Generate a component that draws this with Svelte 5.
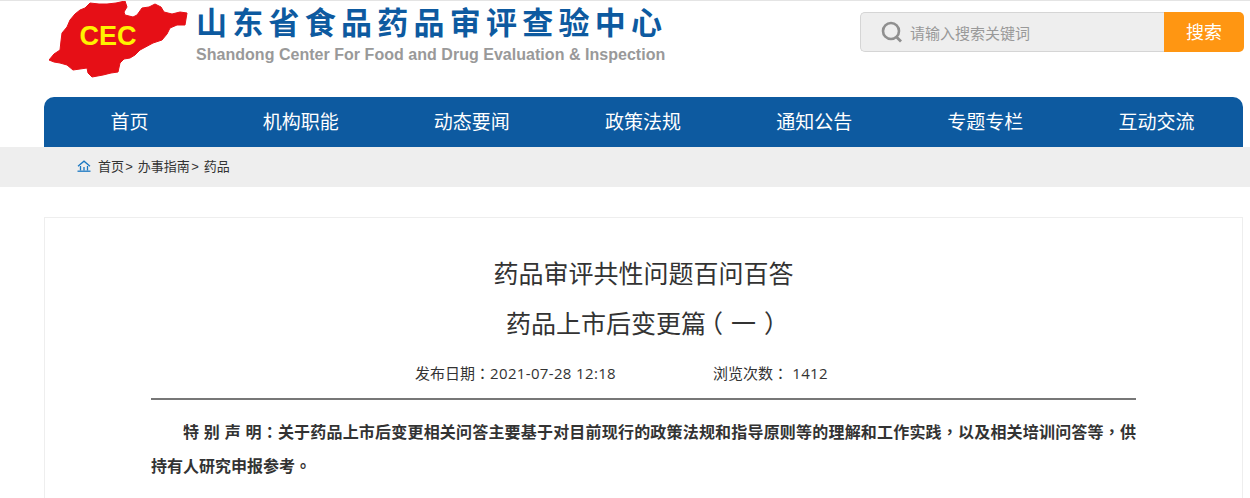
<script>
	const navItems = ['首页', '机构职能', '动态要闻', '政策法规', '通知公告', '专题专栏', '互动交流'];
</script>

<div class="page">
	<header class="top">
		<div class="brand">
			<svg class="logo" width="140" height="78" viewBox="0 0 140 78">
				<path
					d="M31 9 L36 7 L41 2 L50 3 L58 3 L67 2 L76 0 L78 6 L75 11 L76 14 L84 16 L88 14 L93 7 L100 6 L106 3 L112 6 L115 11 L123 13 L131 11 L138 12 L137 18 L136 24 L128 24 L121 27 L118 33 L113 39 L104 42 L91 49 L86 54 L81 57 L75 58 L71 62 L69 71 L62 72 L54 74 L43 76 L39 72 L38 67 L31 68 L24 69 L18 64 L11 62 L5 61 L0 59 L5 53 L11 49 L12 40 L13 32 L18 26 L21 19 L26 13 Z"
					fill="#e60f16"
					stroke="#e60f16"
					stroke-linejoin="round"
				/>
				<text x="59" y="44" text-anchor="middle" class="logo-text">CEC</text>
			</svg>
			<div class="names">
				<div class="cn">山东省食品药品审评查验中心</div>
				<div class="en">Shandong Center For Food and Drug Evaluation &amp; Inspection</div>
			</div>
		</div>
		<div class="search">
			<div class="field">
				<svg width="24" height="24" viewBox="0 0 24 24" fill="none" stroke="#8f8f8f">
					<circle cx="11" cy="11" r="8" stroke-width="2.6" />
					<path d="M16.5 17 L21 21.5" stroke-width="2.8" />
				</svg>
				<span>请输入搜索关键词</span>
			</div>
			<div class="btn">搜索</div>
		</div>
	</header>

	<nav>
		{#each navItems as item}
			<a href="#top">{item}</a>
		{/each}
	</nav>

	<div class="crumbs">
		<svg width="14" height="12" viewBox="0 0 14 12" fill="none" stroke="#1a78c2" stroke-width="1.3">
			<path d="M1 6.2 L7 1.2 L13 6.2" />
			<path d="M3.5 6 V10.5 M10.5 6 V10.5 M7 7 V10.5" />
			<path d="M0.5 11.2 H13.5" />
		</svg>
		<span>首页<b>&gt;</b> 办事指南<b>&gt;</b> 药品</span>
	</div>

	<main class="card">
		<h1>药品审评共性问题百问百答</h1>
		<h1>药品上市后变更篇<span class="open">（</span>一<span class="close">）</span></h1>
		<div class="meta">
			<span>发布日期<span class="p">：</span><span class="num">2021-07-28 12:18</span></span>
			<span>浏览次数<span class="p">：</span> <span class="num">1412</span></span>
		</div>
		<div class="body">
			<p>特 别 声 明<span class="p">：</span>关于药品上市后变更相关问答主要基于对目前现行的政策法规和指导原则等的理解和工作实践<span class="p">，</span>以及相关培训问答等<span class="p">，</span>供持有人研究申报参考<span class="p">。</span></p>
		</div>
	</main>
</div>

<style>
	:global(body) {
		margin: 0;
		background: #fff;
		overflow: hidden;
	}

	.page {
		height: 498px;
		overflow: hidden;
		font-family: "Liberation Sans", "Noto Sans CJK SC", sans-serif;
		color: #333;
	}

	.top {
		display: flex;
		justify-content: space-between;
		height: 97px;
		box-sizing: border-box;
		padding: 0 6px 0 49px;
		border-top: 1px solid #e4e4e4;
	}

	.brand {
		display: flex;
		gap: 7px;
	}

	.logo {
		display: block;
	}

	.logo-text {
		font-family: "Liberation Sans", sans-serif;
		font-size: 27px;
		font-weight: 700;
		fill: #fff200;
	}

	.cn {
		margin-top: 3px;
		font-size: 31px;
		line-height: 40px;
		font-weight: 700;
		letter-spacing: 5.25px;
		color: #0d5aa0;
		white-space: nowrap;
	}

	.en {
		margin-top: 1px;
		font-size: 16px;
		line-height: 20px;
		font-weight: 700;
		letter-spacing: 0.03px;
		color: #999;
		white-space: nowrap;
	}

	.search {
		display: flex;
		margin-top: 11px;
		height: 40px;
	}

	.field {
		display: flex;
		align-items: center;
		gap: 6px;
		width: 304px;
		box-sizing: border-box;
		padding-left: 19px;
		background: #eee;
		border: 1px solid #d5d5d5;
		border-right: none;
		border-radius: 5px 0 0 5px;
		font-size: 15px;
		color: #999;
	}

	.btn {
		width: 80px;
		box-sizing: border-box;
		padding-top: 3px;
		line-height: 37px;
		text-align: center;
		background: #ff9612;
		border-radius: 0 5px 5px 0;
		color: #fff;
		font-size: 18px;
	}

	nav {
		display: grid;
		grid-template-columns: repeat(7, 1fr);
		width: 1199px;
		box-sizing: border-box;
		padding-right: 1px;
		margin-left: 44px;
		height: 50px;
		background: #0d5aa0;
		border-radius: 10px 10px 0 0;
	}

	nav a {
		font-size: 19px;
		line-height: 52px;
		text-align: center;
		color: #fff;
		text-decoration: none;
	}

	.crumbs {
		display: flex;
		align-items: center;
		gap: 7px;
		height: 40px;
		box-sizing: border-box;
		padding: 0 0 3px 77px;
		background: #eee;
		font-size: 13px;
	}

	.crumbs b {
		margin: 0 1.3px;
		font-weight: 400;
	}

	.card {
		width: 1199px;
		box-sizing: border-box;
		margin: 30px 0 0 44px;
		height: 400px;
		padding: 31px 106px 0;
		border: 1px solid #eee;
	}

	h1 {
		margin: 0;
		font-size: 25px;
		line-height: 50px;
		font-weight: 400;
		text-align: center;
		color: #333;
	}

	.open {
		margin: 0 8px 0 -8px;
	}

	.close {
		margin: 0 -8px 0 8px;
	}

	.meta {
		display: flex;
		gap: 97px;
		margin-top: 14px;
		padding: 0 0 14px 264px;
		border-bottom: 2px solid #777;
		font-size: 15px;
		line-height: 20px;
	}

	.num {
		font-family: "Open Sans", sans-serif;
		letter-spacing: 0.35px;
	}

	.p {
		font-family: "Noto Sans CJK TC", sans-serif;
	}

	.body p {
		margin: 15px 0 0;
		font-size: 16px;
		line-height: 32px;
		font-weight: 700;
		text-indent: 32px;
		text-align: justify;
	}
</style>
